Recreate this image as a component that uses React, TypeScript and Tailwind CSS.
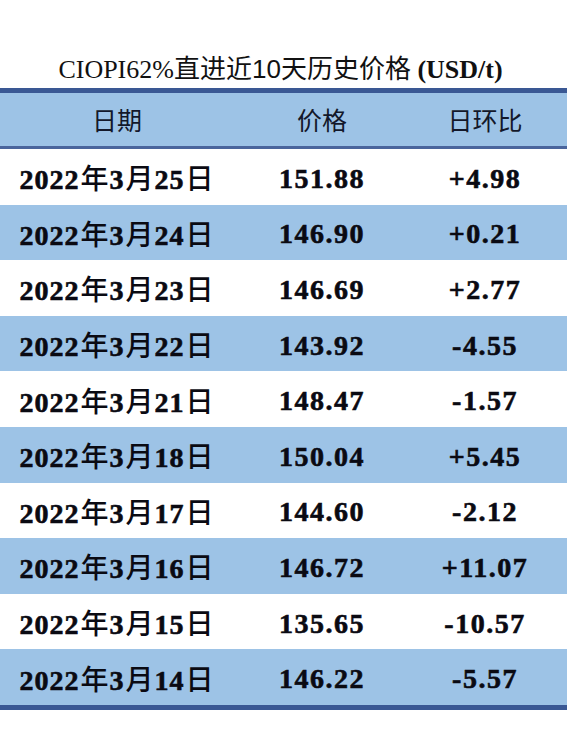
import React from "react";

const rows = [
  ["2022年3月25日", "151.88", "+4.98"],
  ["2022年3月24日", "146.90", "+0.21"],
  ["2022年3月23日", "146.69", "+2.77"],
  ["2022年3月22日", "143.92", "-4.55"],
  ["2022年3月21日", "148.47", "-1.57"],
  ["2022年3月18日", "150.04", "+5.45"],
  ["2022年3月17日", "144.60", "-2.12"],
  ["2022年3月16日", "146.72", "+11.07"],
  ["2022年3月15日", "135.65", "-10.57"],
  ["2022年3月14日", "146.22", "-5.57"],
];

const serif = "font-['Liberation_Serif','Noto_Sans_CJK_SC',serif]";

function DateText({ s }: { s: string }) {
  const parts = s.match(/[0-9]+|[^0-9]+/g) || [];
  return (
    <>
      {parts.map((p, i) =>
        /[0-9]/.test(p) ? (
          <span key={i} className="tracking-[1px]">{p}</span>
        ) : (
          <span
            key={i}
            className="font-['Noto_Sans_CJK_SC',sans-serif] font-medium [-webkit-text-stroke:0px] tracking-[0px] px-[1px]"
          >
            {p}
          </span>
        )
      )}
    </>
  );
}

export default function App() {
  return (
    <div className="w-[567px] h-[748px] bg-white overflow-hidden">
      <div className="h-[88px] flex items-end justify-center pb-[5px] pr-[6px]">
        <div className={`${serif} text-[26px] leading-none text-[#111] whitespace-nowrap`}>
          <span>CIOPI62%</span>
          <span className="font-['Noto_Sans_CJK_SC',sans-serif] font-normal">直进近</span>
          <span className="font-['Liberation_Sans',sans-serif]">10</span>
          <span className="font-['Noto_Sans_CJK_SC',sans-serif] font-normal">天历史价格</span>
          <span className="font-bold"> (USD/t)</span>
        </div>
      </div>
      <div className="border-t-[5px] border-b-[5px] border-[#3a5894]">
        <div className="grid grid-cols-[234px_176px_150px] h-[56px] items-center bg-[#9dc3e6] border-b-[3px] border-[#4a659c] font-['Noto_Sans_CJK_SC',sans-serif] text-[25px] leading-none text-[#13182a]">
          <div className="text-center">日期</div>
          <div className="text-center">价格</div>
          <div className="text-center">日环比</div>
        </div>
        {rows.map((r, i) => (
          <div
            key={i}
            className={`grid grid-cols-[234px_176px_150px] h-[55.6px] items-center pt-[4px] ${
              i % 2 === 1 ? "bg-[#9dc3e6]" : "bg-white"
            } ${serif} font-bold text-[28px] leading-none text-[#0a0a12] [-webkit-text-stroke:0.6px_#0a0a12]`}
          >
            <div className="text-center whitespace-nowrap">
              <DateText s={r[0]} />
            </div>
            <div className="text-center tracking-[1.5px]">{r[1]}</div>
            <div className="text-center tracking-[1.5px]">{r[2]}</div>
          </div>
        ))}
      </div>
    </div>
  );
}
